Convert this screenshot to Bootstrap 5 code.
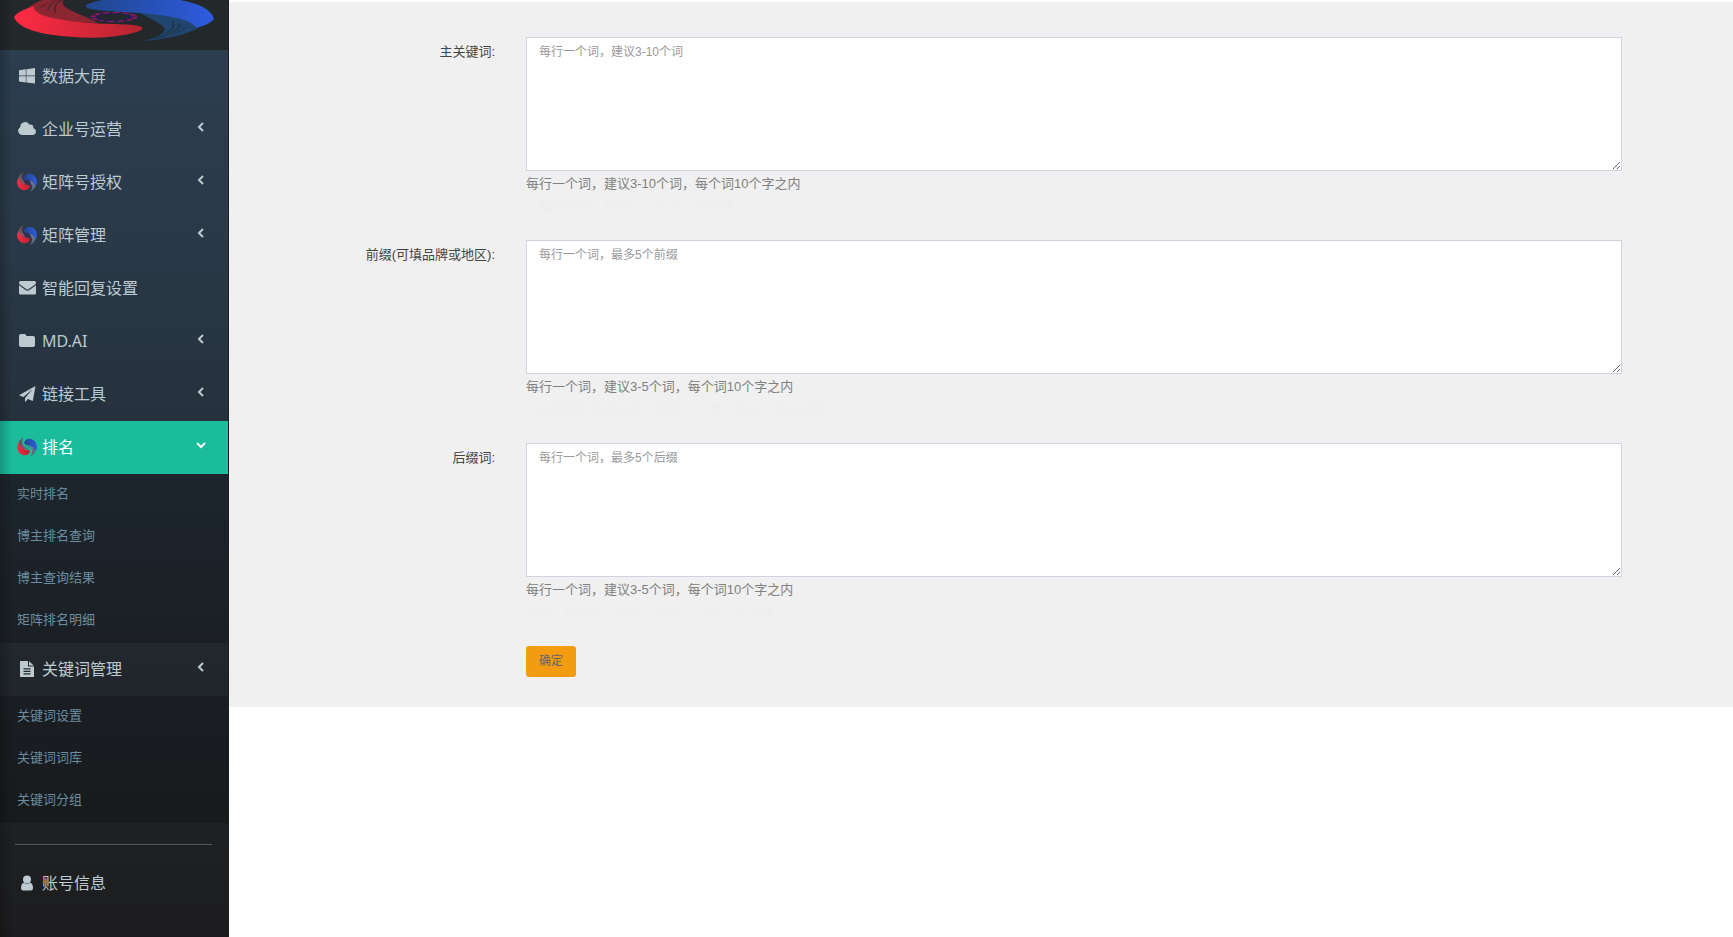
<!DOCTYPE html>
<html lang="zh-CN">
<head>
<meta charset="utf-8">
<meta name="viewport" content="width=device-width, initial-scale=1">
<title>关键词设置</title>
<link href="https://cdn.jsdelivr.net/npm/bootstrap@5.3.0/dist/css/bootstrap.min.css" rel="stylesheet">
<style>
body{font-family:"Liberation Sans","Noto Sans CJK SC",sans-serif;font-size:13px;line-height:22px;color:#555;background:#fff}
.side{width:229px;border-right:1px solid #1c1e20;background:linear-gradient(#2d3f52 0,#2a3948 25%,#25303b 47%,#22272e 70%,#1e2123 89%,#1c1c1e 100%);font-family:"Noto Sans","Noto Sans CJK SC",sans-serif;position:relative}
.side::after{content:"";position:absolute;inset:0 auto 0 0;width:12px;background:linear-gradient(90deg,rgba(0,0,0,.2),transparent);pointer-events:none}
.brand{height:50px;background:#23282b;padding-left:14px}
.brand svg{width:200px;height:42px;display:block;--wisp:#8c2630;--wisp2:#20456f}
.side a{text-decoration:none}
.item{height:53px;padding:0 21px 2px 17px;font-size:16px;color:#bdcbd1}
.item:hover{color:#fff}
.item .ico{width:20px;height:20px;margin-right:5px;flex:none;fill:currentColor;--wisp:#7b5663;--wisp2:#64788d}
.item .arrow{width:12px;height:12px;margin-bottom:4px;fill:none;stroke:currentColor;stroke-width:2}
.item.on{background:#1abc9c;color:#fff}
.sub{background:rgba(0,0,0,.2);padding-bottom:1px}
.sub a{display:flex;align-items:center;height:42px;padding:0 0 4px 17px;font-size:13px;color:#6b8da0}
.rule{margin:21px 16px 12px 15px;border-top:1px solid #555;opacity:1}
.panel-form{background:#f0f0f0;margin-top:2px;padding:35px 0 30px}
.line{display:grid;grid-template-columns:297fr 1096fr 111fr}
.line+.line{margin-top:23px}
.line label{padding:4px 31px 0 0;text-align:right;color:#444}
.line textarea.form-control{height:134px;padding:4px 12px;font-size:12px;line-height:20px;border:1px solid #d0d3e0;border-radius:0;resize:vertical}
.line textarea::placeholder{color:#999}
.tip{color:#808080;margin-top:2px}
.hint{color:#eee}
.btn-ok{--bs-btn-bg:#f39c12;--bs-btn-color:#666;--bs-btn-hover-bg:#e08e0b;--bs-btn-hover-color:#555;border:0;border-radius:3px;font-size:12px;line-height:19px;padding:6px 13px}
</style>
</head>
<body>
<svg class="position-absolute" width="0" height="0" aria-hidden="true" xmlns="http://www.w3.org/2000/svg">
  <linearGradient id="gr" x1="0" x2="1"><stop offset="0" stop-color="#ff2b45"/><stop offset="1" stop-color="#b5242f"/></linearGradient>
  <linearGradient id="gb" x1="0" x2="1"><stop offset="0" stop-color="#2e5be0"/><stop offset="1" stop-color="#20478c"/></linearGradient>
  <symbol id="swirl" viewBox="0 0 200 200" preserveAspectRatio="none">
    <path fill="var(--wisp)" d="M12 72C18 40 36 16 64 4C48 26 46 44 52 62C60 84 72 96 84 124C58 122 22 108 12 72Z"/>
    <path fill="url(#gr)" d="M0 100C4 78 12 66 20 58C18 96 46 116 84 126C108 130 132 128 128 150C116 178 84 188 60 180C24 172 4 144 0 100Z"/>
    <g transform="rotate(180 100 100)">
      <path fill="var(--wisp2)" d="M12 66C22 36 42 14 70 4C50 26 46 48 52 66C58 84 64 94 76 120C50 116 22 100 12 66Z"/>
      <path fill="url(#gb)" d="M0 92C4 74 12 60 18 58C22 92 50 112 84 118C110 124 132 128 128 148C116 174 84 186 60 180C24 170 4 144 0 92Z"/>
    </g>
    <g fill="none" stroke="#23282b" stroke-opacity=".55" stroke-width="2">
      <path d="M26 62C34 40 46 24 60 12M34 74C34 48 44 32 58 18M42 84C38 60 42 44 50 32M174 138C166 160 154 176 140 188M166 126C166 152 156 168 142 182M158 116C162 140 158 156 150 168"/>
    </g>
    <ellipse cx="100" cy="100" rx="21" ry="18" fill="none" stroke="#8c1670" stroke-width="5" stroke-dasharray="7 3"/>
    <ellipse cx="100" cy="100" rx="17" ry="13" fill="none" stroke="#27128c" stroke-width="3" stroke-dasharray="4 5"/>
  </symbol>
  <symbol id="win" viewBox="0 0 20 20"><path d="M2 4.3 8.8 3.3V9.6H2ZM9.4 3.2 18 2V9.6H9.4ZM2 10.2H8.8V16.5L2 15.5ZM9.4 10.2H18V17.6L9.4 16.5Z"/></symbol>
  <symbol id="cloud" viewBox="0 0 20 20"><path d="M5.2 16A4.2 4.2 0 0 1 3.2 8.2 5 5 0 0 1 12.6 5.7 2.9 2.9 0 0 1 16.3 9.3 3.4 3.4 0 0 1 15.6 16Z"/></symbol>
  <symbol id="mail" viewBox="0 0 20 20"><path d="M2 4.5Q2 3 3.5 3H17.5Q19 3 19 4.5 19 6 17.5 7L11.8 11Q10.5 12 9.2 11L3.5 7Q2 6 2 4.5ZM2 7.3Q5 9.5 8.5 12 10.5 13.3 12.5 12 16 9.6 19 7.3V15Q19 16.5 17.5 16.5H3.5Q2 16.5 2 15Z"/></symbol>
  <symbol id="folder" viewBox="0 0 20 20"><path d="M2 5Q2 3 4 3H7.5Q9.3 3 9.3 5H16Q18 5 18 7V14Q18 16 16 16H4Q2 16 2 14Z"/></symbol>
  <symbol id="plane" viewBox="0 0 20 20"><path d="M18.5 2 15.8 17 10.8 15 8 18.3V14L15.8 5 6.4 13.1 2 11.3Z"/></symbol>
  <symbol id="doc" viewBox="0 0 20 20"><path fill-rule="evenodd" d="M3 2H11V7.5H17V18H3ZM12 2.2 16.8 6.6H12ZM6.5 9.3V10.4H13.5V9.3ZM6.5 11.8V12.9H13.5V11.8ZM6.5 14.3V15.4H13.5V14.3Z"/></symbol>
  <symbol id="user" viewBox="0 0 20 20"><circle cx="10" cy="6.5" r="4"/><path d="M7 9.8Q10 12 13 9.8 16 10.5 16 15 16 17.5 13.8 17.5H6.2Q4 17.5 4 15 4 10.5 7 9.8Z"/></symbol>
  <symbol id="left" viewBox="0 0 12 12"><path d="M8 2 4 6 8 10"/></symbol>
  <symbol id="down" viewBox="0 0 12 12"><path d="M2 4 6 8 10 4"/></symbol>
</svg>
<div class="d-flex min-vh-100">
  <nav class="side flex-shrink-0" aria-label="主菜单">
    <div class="brand"><svg viewBox="0 32 200 168" preserveAspectRatio="none" aria-hidden="true"><use href="#swirl" width="200" height="200"/></svg></div>
    <a href="#" class="item d-flex align-items-center"><svg class="ico"><use href="#win"/></svg>数据大屏</a>
    <a href="#" class="item d-flex align-items-center"><svg class="ico"><use href="#cloud"/></svg>企业号运营<svg class="arrow ms-auto"><use href="#left"/></svg></a>
    <a href="#" class="item d-flex align-items-center"><svg class="ico"><use href="#swirl"/></svg>矩阵号授权<svg class="arrow ms-auto"><use href="#left"/></svg></a>
    <a href="#" class="item d-flex align-items-center"><svg class="ico"><use href="#swirl"/></svg>矩阵管理<svg class="arrow ms-auto"><use href="#left"/></svg></a>
    <a href="#" class="item d-flex align-items-center"><svg class="ico"><use href="#mail"/></svg>智能回复设置</a>
    <a href="#" class="item d-flex align-items-center"><svg class="ico"><use href="#folder"/></svg>MD.AI<svg class="arrow ms-auto"><use href="#left"/></svg></a>
    <a href="#" class="item d-flex align-items-center"><svg class="ico"><use href="#plane"/></svg>链接工具<svg class="arrow ms-auto"><use href="#left"/></svg></a>
    <a href="#" class="item on d-flex align-items-center"><svg class="ico"><use href="#swirl"/></svg>排名<svg class="arrow ms-auto"><use href="#down"/></svg></a>
    <div class="sub">
      <a href="#">实时排名</a><a href="#">博主排名查询</a><a href="#">博主查询结果</a><a href="#">矩阵排名明细</a>
    </div>
    <a href="#" class="item d-flex align-items-center"><svg class="ico"><use href="#doc"/></svg>关键词管理<svg class="arrow ms-auto"><use href="#left"/></svg></a>
    <div class="sub">
      <a href="#">关键词设置</a><a href="#">关键词词库</a><a href="#">关键词分组</a>
    </div>
    <hr class="rule">
    <a href="#" class="item d-flex align-items-center"><svg class="ico"><use href="#user"/></svg>账号信息</a>
  </nav>
  <main class="flex-grow-1">
    <form class="panel-form">
      <div class="line">
        <label for="kw">主关键词:</label>
        <div>
          <textarea id="kw" class="form-control" placeholder="每行一个词，建议3-10个词"></textarea>
          <div class="tip">每行一个词，建议3-10个词，每个词10个字之内</div>
          <div class="hint">一般填行业，例如：二手车，房租赁</div>
        </div>
      </div>
      <div class="line">
        <label for="pre">前缀(可填品牌或地区):</label>
        <div>
          <textarea id="pre" class="form-control" placeholder="每行一个词，最多5个前缀"></textarea>
          <div class="tip">每行一个词，建议3-5个词，每个词10个字之内</div>
          <div class="hint">可设置地区或者品牌，例如：广州，南京，某某品牌</div>
        </div>
      </div>
      <div class="line">
        <label for="suf">后缀词:</label>
        <div>
          <textarea id="suf" class="form-control" placeholder="每行一个词，最多5个后缀"></textarea>
          <div class="tip">每行一个词，建议3-5个词，每个词10个字之内</div>
          <div class="hint">例如：哪里好，价格，公司，门店，多少钱</div>
        </div>
      </div>
      <div class="line">
        <span></span>
        <div><button type="button" class="btn btn-ok d-block">确定</button></div>
      </div>
    </form>
  </main>
</div>
<script src="https://cdn.jsdelivr.net/npm/bootstrap@5.3.0/dist/js/bootstrap.bundle.min.js"></script>
</body>
</html>
